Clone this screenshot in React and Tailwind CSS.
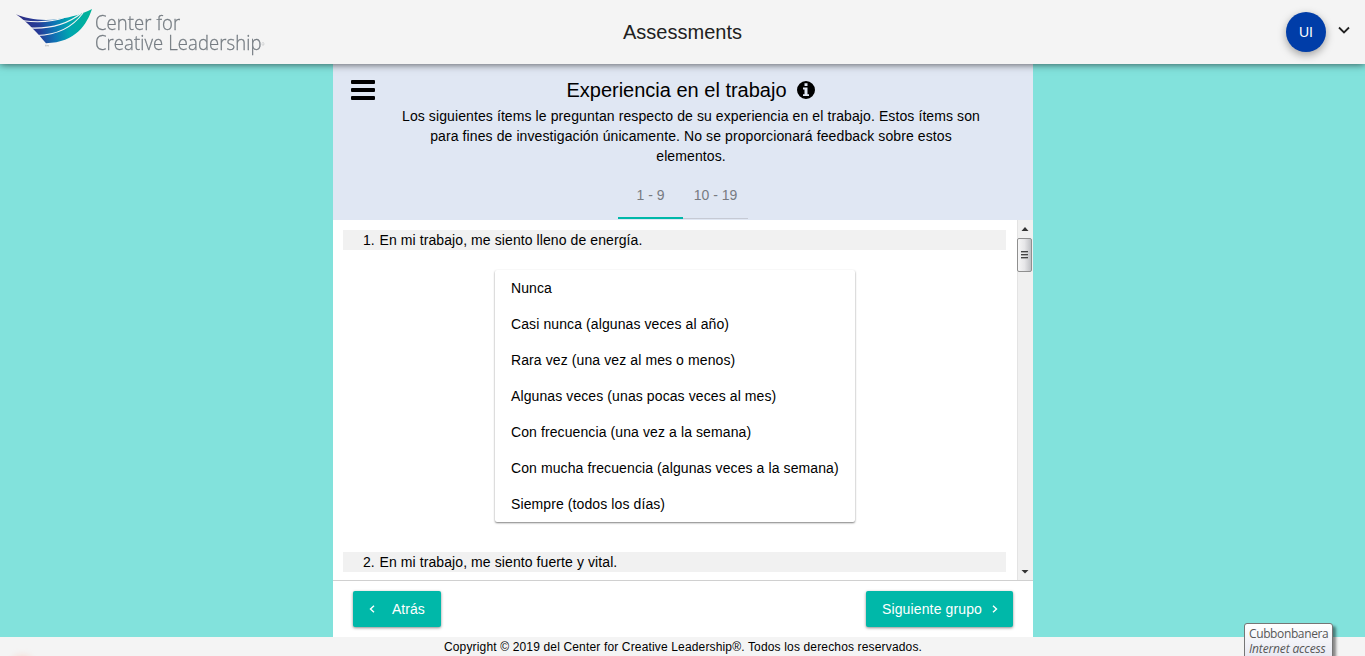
import React from "react";

const options = [
  "Nunca",
  "Casi nunca (algunas veces al año)",
  "Rara vez (una vez al mes o menos)",
  "Algunas veces (unas pocas veces al mes)",
  "Con frecuencia (una vez a la semana)",
  "Con mucha frecuencia (algunas veces a la semana)",
  "Siempre (todos los días)",
];

function Wing() {
  return (
    <svg className="block h-16 w-[95px] shrink-0" viewBox="0 0 95 64">
      <defs>
        <linearGradient id="wing" x1="16" y1="20" x2="90" y2="14" gradientUnits="userSpaceOnUse">
          <stop offset="0" stopColor="#2e2a80" />
          <stop offset="0.3" stopColor="#253c98" />
          <stop offset="0.5" stopColor="#1072b4" />
          <stop offset="0.7" stopColor="#00a5b0" />
          <stop offset="1" stopColor="#00b398" />
        </linearGradient>
      </defs>
      <path d="M16 14.300 C26 18.500 42 21.500 58 19 C72 17.500 83 13.500 92 9 C87 24 76 42.500 46 43.200 C39 35 28 22.500 16 14.300Z" fill="url(#wing)" />
      <g fill="none" stroke="#f4f4f4" strokeWidth="1.100">
        <path d="M23 20.800 C38 22.500 53 21.800 65 17.300" />
        <path d="M30 28 C48 28.800 67 24.500 81 13.500" />
        <path d="M37 35.500 C55 35 72 28 83 13" />
      </g>
      <path d="M45 45.200h1.500M45.700 45.200v1.300M47 46.500v-1.300l.7 .7 .7-.7v1.300" fill="none" stroke="#999" strokeWidth=".4" />
    </svg>
  );
}

function Logo() {
  return (
    <div className="flex h-16 items-start font-['Open_Sans',sans-serif] text-[#757c82]">
      <Wing />
      <div className="flex origin-left scale-x-[0.88] flex-col pt-3 text-[21px] font-light leading-5 tracking-[0.1px] [-webkit-text-stroke:0.3px_#757c82]">
        <span className="whitespace-nowrap">Center for</span>
        <span className="whitespace-nowrap">
          Creative Leadership<span className="align-[4px] text-[4px] leading-none [-webkit-text-stroke:0px]">®</span>
        </span>
      </div>
    </div>
  );
}

function Question({ number, text }) {
  return (
    <div className="ml-[10px] flex h-5 w-[663px] bg-[#f1f1f1] pl-5 text-sm leading-5">
      <span className="w-[16.500px]">{number}.</span>
      <span className="tracking-[0.09px]">{text}</span>
    </div>
  );
}

function Grip() {
  return <div className="h-[2px] w-[7px] border-t border-[#444] bg-[#aaa]" />;
}

function Scrollbar() {
  return (
    <div className="flex h-[360px] w-4 flex-col items-center border-l border-[#e3e3e3] bg-[#f0f0f0]">
      <svg className="block h-[18px] w-[15px]" viewBox="0 0 15 18">
        <path d="M3.500 11 L7 7 L10.500 11Z" fill="#333" />
      </svg>
      <div className="-ml-0.5 flex h-[34px] w-[15px] shrink-0 flex-col items-center justify-center gap-px rounded-[2px] border border-[#8f8f8f] bg-linear-to-r from-[#f6f6f6] via-[#e6e6e8] to-[#bfc0c4]">
        <Grip />
        <Grip />
        <Grip />
      </div>
      <div className="flex-1" />
      <svg className="block h-[18px] w-[15px]" viewBox="0 0 15 18">
        <path d="M3.500 8 L10.500 8 L7 11.500Z" fill="#333" />
      </svg>
    </div>
  );
}

export default function App() {
  return (
    <div className="relative flex h-[656px] w-[1365px] flex-col overflow-hidden bg-[#82e2dc] font-['Liberation_Sans',Arial,sans-serif] text-black">
      <header className="z-10 grid h-16 shrink-0 grid-cols-[1fr_auto_1fr] items-center bg-[#f4f4f4] shadow-[0_0_8px_rgba(0,0,0,0.7)]">
        <Logo />
        <h1 className="text-xl text-[#212121]">Assessments</h1>
        <div className="flex items-center justify-end pr-[15px]">
          <div className="flex size-10 items-center justify-center rounded-full bg-[#003da8] text-sm text-white shadow-[0_3px_8px_rgba(0,0,0,0.35)]">UI</div>
          <svg className="mb-1 ml-3 block h-3 w-3" viewBox="0 0 12 12" fill="none" stroke="#222" strokeWidth="1.8">
            <path d="M1 3.500 L6 8.500 L11 3.500" />
          </svg>
        </div>
      </header>

      <main className="ml-[333px] flex h-[573px] w-[700px] shrink-0 flex-col bg-white">
        <section className="flex h-[156px] shrink-0 bg-[#e0e7f3]">
          <button className="ml-[18px] mt-4 flex h-5 w-6 flex-col justify-between">
            <span className="h-1 w-6 rounded-[1px] bg-black" />
            <span className="h-1 w-6 rounded-[1px] bg-black" />
            <span className="h-1 w-6 rounded-[1px] bg-black" />
          </button>
          <div className="ml-[18px] flex w-[596px] flex-col items-center">
            <div className="mt-[11px] flex h-[30px] items-center gap-[10px] pr-px">
              <h2 className="text-xl">Experiencia en el trabajo</h2>
              <svg className="block size-[18px]" viewBox="0 0 1536 1536">
                <path fillRule="evenodd" d="M768 0a768 768 0 1 0 0 1536A768 768 0 0 0 768 0ZM640 192h256v224H640ZM512 560h384v560h128v160H512v-160h128V720H512Z" fill="#000" />
              </svg>
            </div>
            <p className="mt-px whitespace-nowrap text-center text-sm leading-5 tracking-[0.1px]">
              Los siguientes ítems le preguntan respecto de su experiencia en el trabajo. Estos ítems son<br />
              para fines de investigación únicamente. No se proporcionará feedback sobre estos<br />
              elementos.
            </p>
            <div className="mr-4 mt-[5px] flex h-12 text-sm leading-[46px] text-[#777b82]">
              <div className="w-[65px] border-b-2 border-[#00b8a9] pt-px text-center">1 - 9</div>
              <div className="w-[65px] border-b border-[#c6cad4] pt-px text-center">10 - 19</div>
            </div>
          </div>
        </section>

        <section className="flex h-[360px] shrink-0 overflow-hidden">
          <div className="w-[684px] pt-[10px]">
            <Question number={1} text="En mi trabajo, me siento lleno de energía." />
            <div className="ml-[162px] mt-5 h-[252px] w-[360px] rounded-[2px] bg-white shadow-[0_1px_2px_rgba(0,0,0,0.5)]">
              {options.map((label) => (
                <div key={label} className="flex h-9 items-center whitespace-nowrap pl-4 text-sm tracking-[0.1px]">{label}</div>
              ))}
            </div>
            <div className="h-[30px]" />
            <Question number={2} text="En mi trabajo, me siento fuerte y vital." />
          </div>
          <Scrollbar />
        </section>

        <section className="flex h-[57px] shrink-0 items-start justify-between border-t border-[#d0d0d0] px-5 pt-[10px]">
          <button className="flex h-9 w-[88px] items-center rounded-[2px] bg-[#00b8a9] pl-4 text-sm text-white shadow-[0_1px_3px_rgba(0,0,0,0.45)]">
            <svg className="mr-[17px] block h-2 w-[6px]" viewBox="0 0 6 8" fill="none" stroke="white" strokeWidth="1.4"><path d="M5 .8 L1.500 4 L5 7.200" /></svg>
            Atrás
          </button>
          <button className="flex h-9 w-[147px] items-center whitespace-nowrap rounded-[2px] bg-[#00b8a9] pl-4 text-sm tracking-[0.13px] text-white shadow-[0_1px_3px_rgba(0,0,0,0.45)]">
            Siguiente grupo
            <svg className="ml-[10px] block h-2 w-[6px]" viewBox="0 0 6 8" fill="none" stroke="white" strokeWidth="1.4"><path d="M1 .8 L4.500 4 L1 7.200" /></svg>
          </button>
        </section>
      </main>

      <footer className="h-[19px] shrink-0 bg-[#f4f4f4] pl-px pt-px text-center text-xs leading-[18px] tracking-[0.155px]">
        Copyright © 2019 del Center for Creative Leadership®. Todos los derechos reservados.
      </footer>

      <div className="absolute left-[12px] top-[655px] h-4 w-5 rounded-full bg-[#ffb199]/30 blur-[3px]" />

      <div className="absolute left-[1244px] top-[623px] h-[40px] w-[89px] whitespace-nowrap rounded-t-[3px] border border-[#767676] bg-linear-to-b from-white to-[#e4e5f0] pl-[4px] pt-[2px] font-['Open_Sans',sans-serif] text-xs leading-[15px] tracking-[-0.38px] text-[#575757] shadow-[3px_3px_3px_rgba(0,0,0,0.45)]">
        <div>Cubbonbanera</div>
        <div className="italic tracking-[-0.15px]">Internet access</div>
      </div>
    </div>
  );
}
